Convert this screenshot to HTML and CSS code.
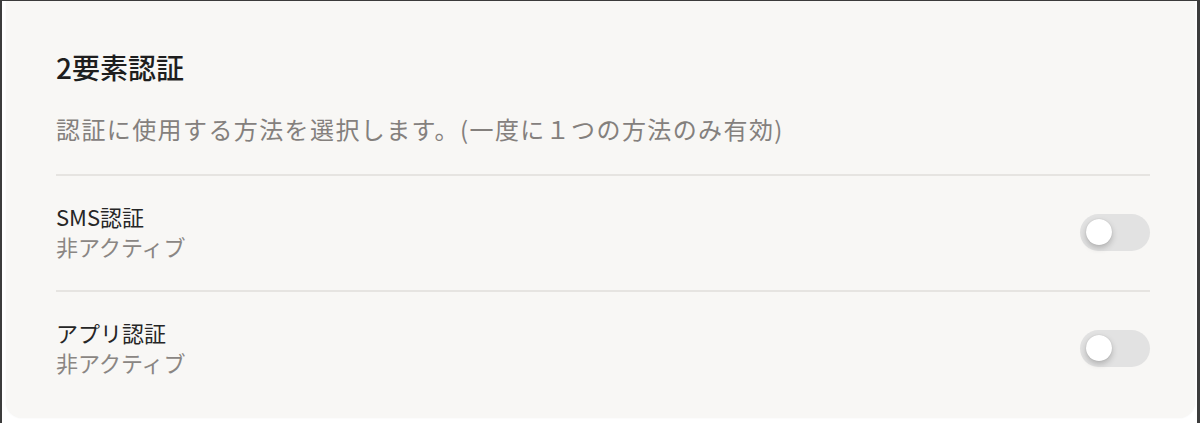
FILE: index.html
```html
<!DOCTYPE html>
<html lang="ja">
<head>
<meta charset="utf-8">
<title>2要素認証</title>
<link rel="stylesheet" href="styles.css">
</head>
<body>
<div class="frame">
  <section class="card">
    <h1 class="title">2要素認証</h1>
    <p class="desc">認証に使用する方法を選択します。(一度に１つの方法のみ有効)</p>
    <div class="row">
      <div class="info">
        <div class="label">SMS認証</div>
        <div class="status">非アクティブ</div>
      </div>
      <div class="toggle"><span class="knob"></span></div>
    </div>
    <div class="row">
      <div class="info">
        <div class="label">アプリ認証</div>
        <div class="status">非アクティブ</div>
      </div>
      <div class="toggle"><span class="knob"></span></div>
    </div>
  </section>
</div>
</body>
</html>
```

FILE: styles.css
```css
html, body {
  margin: 0;
  padding: 0;
  background: #ffffff;
}
body {
  font-family: "Noto Sans CJK JP", "Noto Sans", sans-serif;
  width: 1200px;
  height: 423px;
  overflow: hidden;
}
.frame {
  box-sizing: border-box;
  height: 423px;
  border-top: 1px solid #3c3c3c;
  border-left: 2px solid #3c3c3c;
  border-right: 3px solid #3c3c3c;
  padding: 0 2px 5px 4px;
}
.card {
  background: #f8f7f5;
  border-radius: 0 0 16px 16px;
  padding: 48px 45px 12px 50px;
  box-shadow: 0 0 2px rgba(0,0,0,0.06);
}
.title {
  margin: 0;
  font-size: 28px;
  line-height: 36px;
  font-weight: 500;
  color: #1e1e1e;
}
.desc {
  margin: 27px 0 0;
  font-size: 24px;
  line-height: 34px;
  letter-spacing: 1.4px;
  color: #84807d;
  padding-bottom: 28px;
  border-bottom: 2px solid #e6e4e1;
}
.row {
  display: flex;
  align-items: center;
  justify-content: space-between;
  padding: 25px 0 29px;
}
.row + .row {
  border-top: 2px solid #e6e4e1;
}
.label {
  font-size: 22px;
  line-height: 30px;
  color: #262626;
}
.status {
  font-size: 22px;
  line-height: 30px;
  color: #8a8683;
}
.toggle {
  position: relative;
  width: 70px;
  height: 37px;
  border-radius: 19px;
  background: #e2e2e2;
  margin-top: 3px;
}
.knob {
  position: absolute;
  left: 6px;
  top: 5px;
  width: 26px;
  height: 26px;
  border-radius: 50%;
  background: #ffffff;
  box-shadow: 0 3px 6px rgba(0,0,0,0.22), 0 0 1px rgba(0,0,0,0.2);
}
```
